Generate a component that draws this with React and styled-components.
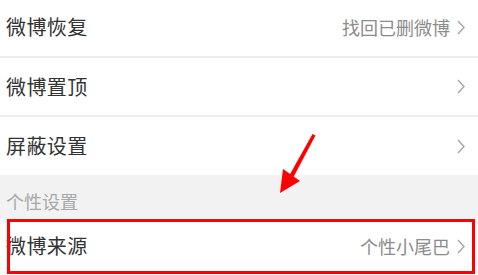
import React from "react";
import styled, { createGlobalStyle } from "styled-components";

const Global = createGlobalStyle`
  html, body { margin: 0; padding: 0; background: #ffffff; }
  body { font-family: "Noto Sans CJK SC", "Noto Sans", sans-serif; }
`;

const Page = styled.div`
  position: relative;
  width: 478px;
  height: 275px;
  overflow: hidden;
  background: #ffffff;
  display: flex;
  flex-direction: column;
`;

const Row = styled.div`
  flex: none;
  height: ${(p) => p.$h}px;
  display: flex;
  align-items: center;
  justify-content: space-between;
  padding: 0 13px 0 6px;
  box-sizing: border-box;
  background: #ffffff;
  border-bottom: ${(p) => (p.$divider ? "2px solid #ececec" : "none")};
`;

const Label = styled.span`
  font-size: 20px;
  color: #333333;
  line-height: 1;
  letter-spacing: 0.4px;
`;

const Right = styled.span`
  display: flex;
  align-items: center;
  gap: 7px;
`;

const Value = styled.span`
  font-size: 18px;
  color: #8c8c8c;
  line-height: 1;
`;

const SectionHeader = styled.div`
  flex: none;
  height: 43px;
  background: #f2f2f2;
  display: flex;
  align-items: center;
  padding: 8px 0 0 6px;
  box-sizing: border-box;
  font-size: 18px;
  color: #a8a8a8;
`;

const Highlight = styled.div`
  position: absolute;
  left: 7px;
  top: 219px;
  width: 468px;
  height: 55px;
  box-sizing: border-box;
  border: 3px solid #ff0000;
  pointer-events: none;
`;

const Arrow = styled.svg`
  position: absolute;
  left: 0;
  top: 0;
  pointer-events: none;
`;

const Chevron = () => (
  <svg width="8" height="15" viewBox="0 0 8 15">
    <path d="M1 1 L7 7.5 L1 14" fill="none" stroke="#a6a6a6" strokeWidth="1.4" />
  </svg>
);

const items = [
  { label: "微博恢复", value: "找回已删微博", h: 60 },
  { label: "微博置顶", value: "", h: 59 },
  { label: "屏蔽设置", value: "", h: 58 },
];

export default function App() {
  return (
    <>
      <Global />
      <Page>
        {items.map((it, i) => (
          <Row key={it.label} $h={it.h} $divider={i < items.length - 1} style={i === 0 ? { marginTop: -2 } : undefined}>
            <Label>{it.label}</Label>
            <Right>
              {it.value && <Value>{it.value}</Value>}
              <Chevron />
            </Right>
          </Row>
        ))}
        <SectionHeader>个性设置</SectionHeader>
        <Row $h={56}>
          <Label>微博来源</Label>
          <Right>
            <Value>个性小尾巴</Value>
            <Chevron />
          </Right>
        </Row>
        <Highlight />
        <Arrow width="478" height="275" viewBox="0 0 478 275">
          <path d="M312.5 134 L315.5 135.5 L293 178 L289 176 Z" fill="#ff0000" />
          <path d="M280 193 L283 169 L300 181 Z" fill="#ff0000" />
        </Arrow>
      </Page>
    </>
  );
}
